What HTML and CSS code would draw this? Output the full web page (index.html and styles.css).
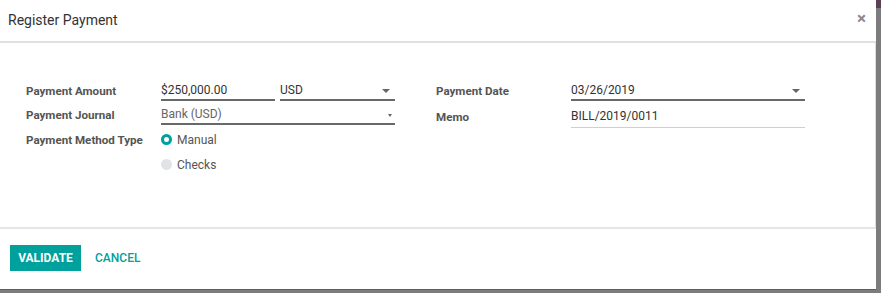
FILE: index.html
```html
<!DOCTYPE html>
<html>
<head>
<meta charset="utf-8">
<link rel="stylesheet" href="styles.css">
</head>
<body>
<div class="backdrop">
  <div class="corner"></div>
  <div class="dialog">
    <div class="header">
      <span class="title">Register Payment</span>
      <span class="close">×</span>
    </div>
    <div class="body">
      <div class="group left">
        <div class="label">Payment Amount</div>
        <div class="field split">
          <div class="input amount">$250,000.00</div>
          <div class="input select">USD<span class="caret"></span></div>
        </div>
        <div class="label">Payment Journal</div>
        <div class="field">
          <div class="input select muted">Bank (USD)<span class="caret small"></span></div>
        </div>
        <div class="label">Payment Method Type</div>
        <div class="field radio-row"><span class="radio on"></span>Manual</div>
        <div class="label"></div>
        <div class="field radio-row"><span class="radio"></span>Checks</div>
      </div>
      <div class="group right">
        <div class="label">Payment Date</div>
        <div class="field">
          <div class="input select">03/26/2019<span class="caret"></span></div>
        </div>
        <div class="label">Memo</div>
        <div class="field">
          <div class="input light">BILL/2019/0011</div>
        </div>
      </div>
    </div>
    <div class="footer">
      <button class="btn primary">VALIDATE</button>
      <button class="btn link">CANCEL</button>
    </div>
  </div>
</div>
</body>
</html>
```
FILE: styles.css
```css
* { box-sizing: border-box; }
html, body { margin: 0; padding: 0; }
body {
  width: 881px;
  height: 293px;
  overflow: hidden;
  font-family: Roboto, "Liberation Sans", sans-serif;
  background: #7c7c7c;
}
.backdrop {
  position: relative;
  width: 881px;
  height: 293px;
}
.corner {
  position: absolute;
  right: 0;
  top: 0;
  width: 5px;
  height: 8px;
  background: #5a3f55;
}
.dialog {
  width: 876px;
  height: 290px;
  background: #fff;
  display: flex;
  flex-direction: column;
  border-bottom: 1px solid #5e5e5e;
}
.header {
  height: 43px;
  border-bottom: 2px solid #dde1e3;
  display: flex;
  align-items: center;
  justify-content: space-between;
  padding: 0 10px 2px 8px;
}
.title {
  font-size: 14px;
  color: #333;
}
.close {
  font-size: 17px;
  font-weight: bold;
  color: #8a8a8a;
  line-height: 1;
  margin-top: -3px;
}
.body {
  height: 184px;
  border-right: 1px solid #dcdcdc;
  display: flex;
  padding: 35px 0 0 26px;
  gap: 41px;
}
.group {
  display: grid;
  grid-template-columns: 135px 234px;
  align-items: center;
}
.left { grid-template-rows: 24px 25px 25px 25px; }
.right { grid-template-rows: 24px 28px; }
.label {
  font-size: 11.6px;
  font-weight: bold;
  color: #545454;
  padding-top: 1px;
}
.field {
  font-size: 12px;
  color: #333;
  height: 100%;
  display: flex;
  align-items: flex-start;
}
.split { gap: 5px; }
.input {
  flex: 1;
  display: flex;
  align-items: center;
  height: 23px;
  border-bottom: 2px solid #686868;
  position: relative;
  padding-top: 3px;
}
.amount { flex: 0 0 114px; }
.select .caret {
  position: absolute;
  right: 5px;
  top: 11px;
  border-left: 4px solid transparent;
  border-right: 4px solid transparent;
  border-top: 4px solid #666;
}
.select .caret.small {
  border-left-width: 2px;
  border-right-width: 2px;
  border-top-width: 3px;
  right: 3px;
  top: 12px;
}
.muted { color: #666; }
.light {
  border-bottom: 1px solid #cfcfcf;
  height: 26px;
  padding-top: 2px;
}
.radio-row {
  align-items: center;
  color: #555;
  gap: 5px;
}
.radio {
  width: 11px;
  height: 11px;
  border-radius: 50%;
  background: #e1e3e6;
}
.radio.on {
  background: #fff;
  border: 3px solid #00a09d;
}
.footer {
  flex: 1;
  border-top: 2px solid #e3e5e8;
  display: flex;
  align-items: center;
  padding: 0 0 2px 10px;
  gap: 4px;
}
.btn {
  font-family: Roboto, "Liberation Sans", sans-serif;
  font-size: 12px;
  border: none;
  cursor: pointer;
  padding: 0 10px;
  height: 26px;
}
.primary {
  background: #00a09d;
  color: #fff;
  font-weight: bold;
  width: 71px;
  padding: 0;
}
.link {
  background: none;
  color: #00a09d;
  font-weight: 500;
}
```
